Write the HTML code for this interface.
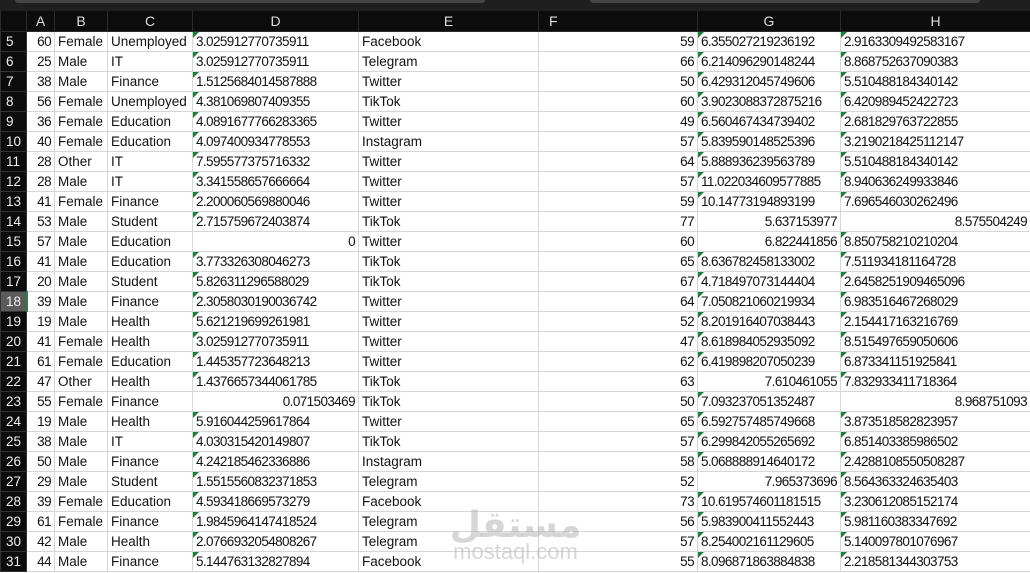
<!DOCTYPE html>
<html><head><meta charset="utf-8"><style>
body{margin:0;width:1030px;height:573px;overflow:hidden;background:#fff;font-family:"Liberation Sans",Arial,sans-serif;position:relative}
.top{position:absolute;left:0;top:0;width:1030px;height:12px;background:#1f1f1f}
.top i{position:absolute;top:0;height:3px;background:#444;border-radius:0 0 3px 3px}
table{position:absolute;left:0;top:11px;width:1030px;border-collapse:collapse;table-layout:fixed;font-size:13.5px}
td,th{height:19px;padding:0 3px;border:1px solid #d6d6d6;white-space:nowrap;overflow:hidden;color:#111;line-height:19px}
th{background:#0c0c0c;color:#ddd;font-weight:normal;border-color:#2a2a2a;border-top:none;text-align:center;height:20px;font-size:14px}
td.n{background:#0c0c0c;color:#eee;text-align:left;padding-left:5px;border-color:#333;letter-spacing:0}
td.n.s{background:#5b5b5b;border-right:2px solid #2e7d4a}
.r{text-align:right;letter-spacing:-.6px}
.t{position:relative;letter-spacing:-.6px}
.t:before{content:"";position:absolute;left:0;top:0;border-top:6px solid #1a7f37;border-right:6px solid transparent}
.wm{position:absolute;left:448px;top:503px;color:rgba(180,180,180,.55);text-align:center;width:135px}
.wm .a{font-family:"Noto Sans CJK SC","DejaVu Sans",sans-serif;font-size:36px;font-weight:bold;line-height:38px}
.wm .b{font-size:22px;line-height:22px}
</style></head><body>
<div class="top"><i style="left:15px;width:470px"></i><i style="left:590px;width:390px"></i></div>
<table>
<colgroup><col style="width:26px"><col style="width:28px"><col style="width:53px"><col style="width:85px"><col style="width:166px"><col style="width:180px"><col style="width:159px"><col style="width:143px"><col style="width:190px"></colgroup>
<tr><th style="background:#0c0c0c"></th><th>A</th><th>B</th><th>C</th><th>D</th><th>E</th><th style="text-align:left;padding-left:10px">F</th><th>G</th><th>H</th></tr>
<tr><td class="n">5</td><td class="r">60</td><td>Female</td><td>Unemployed</td><td class="t">3.025912770735911</td><td>Facebook</td><td class="r">59</td><td class="t">6.355027219236192</td><td class="t">2.9163309492583167</td></tr>
<tr><td class="n">6</td><td class="r">25</td><td>Male</td><td>IT</td><td class="t">3.025912770735911</td><td>Telegram</td><td class="r">66</td><td class="t">6.214096290148244</td><td class="t">8.868752637090383</td></tr>
<tr><td class="n">7</td><td class="r">38</td><td>Male</td><td>Finance</td><td class="t">1.5125684014587888</td><td>Twitter</td><td class="r">50</td><td class="t">6.429312045749606</td><td class="t">5.510488184340142</td></tr>
<tr><td class="n">8</td><td class="r">56</td><td>Female</td><td>Unemployed</td><td class="t">4.381069807409355</td><td>TikTok</td><td class="r">60</td><td class="t">3.9023088372875216</td><td class="t">6.420989452422723</td></tr>
<tr><td class="n">9</td><td class="r">36</td><td>Female</td><td>Education</td><td class="t">4.0891677766283365</td><td>Twitter</td><td class="r">49</td><td class="t">6.560467434739402</td><td class="t">2.681829763722855</td></tr>
<tr><td class="n">10</td><td class="r">40</td><td>Female</td><td>Education</td><td class="t">4.097400934778553</td><td>Instagram</td><td class="r">57</td><td class="t">5.839590148525396</td><td class="t">3.2190218425112147</td></tr>
<tr><td class="n">11</td><td class="r">28</td><td>Other</td><td>IT</td><td class="t">7.595577375716332</td><td>Twitter</td><td class="r">64</td><td class="t">5.888936239563789</td><td class="t">5.510488184340142</td></tr>
<tr><td class="n">12</td><td class="r">28</td><td>Male</td><td>IT</td><td class="t">3.341558657666664</td><td>Twitter</td><td class="r">57</td><td class="t">11.022034609577885</td><td class="t">8.940636249933846</td></tr>
<tr><td class="n">13</td><td class="r">41</td><td>Female</td><td>Finance</td><td class="t">2.200060569880046</td><td>Twitter</td><td class="r">59</td><td class="t">10.14773194893199</td><td class="t">7.696546030262496</td></tr>
<tr><td class="n">14</td><td class="r">53</td><td>Male</td><td>Student</td><td class="t">2.715759672403874</td><td>TikTok</td><td class="r">77</td><td class="r">5.637153977</td><td class="r">8.575504249</td></tr>
<tr><td class="n">15</td><td class="r">57</td><td>Male</td><td>Education</td><td class="r">0</td><td>Twitter</td><td class="r">60</td><td class="r">6.822441856</td><td class="t">8.850758210210204</td></tr>
<tr><td class="n">16</td><td class="r">41</td><td>Male</td><td>Education</td><td class="t">3.773326308046273</td><td>TikTok</td><td class="r">65</td><td class="t">8.636782458133002</td><td class="t">7.511934181164728</td></tr>
<tr><td class="n">17</td><td class="r">20</td><td>Male</td><td>Student</td><td class="t">5.826311296588029</td><td>TikTok</td><td class="r">67</td><td class="t">4.718497073144404</td><td class="t">2.6458251909465096</td></tr>
<tr><td class="n s">18</td><td class="r">39</td><td>Male</td><td>Finance</td><td class="t">2.3058030190036742</td><td>Twitter</td><td class="r">64</td><td class="t">7.050821060219934</td><td class="t">6.983516467268029</td></tr>
<tr><td class="n">19</td><td class="r">19</td><td>Male</td><td>Health</td><td class="t">5.621219699261981</td><td>Twitter</td><td class="r">52</td><td class="t">8.201916407038443</td><td class="t">2.154417163216769</td></tr>
<tr><td class="n">20</td><td class="r">41</td><td>Female</td><td>Health</td><td class="t">3.025912770735911</td><td>Twitter</td><td class="r">47</td><td class="t">8.618984052935092</td><td class="t">8.515497659050606</td></tr>
<tr><td class="n">21</td><td class="r">61</td><td>Female</td><td>Education</td><td class="t">1.445357723648213</td><td>Twitter</td><td class="r">62</td><td class="t">6.419898207050239</td><td class="t">6.873341151925841</td></tr>
<tr><td class="n">22</td><td class="r">47</td><td>Other</td><td>Health</td><td class="t">1.4376657344061785</td><td>TikTok</td><td class="r">63</td><td class="r">7.610461055</td><td class="t">7.832933411718364</td></tr>
<tr><td class="n">23</td><td class="r">55</td><td>Female</td><td>Finance</td><td class="r">0.071503469</td><td>TikTok</td><td class="r">50</td><td class="t">7.093237051352487</td><td class="r">8.968751093</td></tr>
<tr><td class="n">24</td><td class="r">19</td><td>Male</td><td>Health</td><td class="t">5.916044259617864</td><td>Twitter</td><td class="r">65</td><td class="t">6.592757485749668</td><td class="t">3.873518582823957</td></tr>
<tr><td class="n">25</td><td class="r">38</td><td>Male</td><td>IT</td><td class="t">4.030315420149807</td><td>TikTok</td><td class="r">57</td><td class="t">6.299842055265692</td><td class="t">6.851403385986502</td></tr>
<tr><td class="n">26</td><td class="r">50</td><td>Male</td><td>Finance</td><td class="t">4.242185462336886</td><td>Instagram</td><td class="r">58</td><td class="t">5.068888914640172</td><td class="t">2.4288108550508287</td></tr>
<tr><td class="n">27</td><td class="r">29</td><td>Male</td><td>Student</td><td class="t">1.5515560832371853</td><td>Telegram</td><td class="r">52</td><td class="r">7.965373696</td><td class="t">8.564363324635403</td></tr>
<tr><td class="n">28</td><td class="r">39</td><td>Female</td><td>Education</td><td class="t">4.593418669573279</td><td>Facebook</td><td class="r">73</td><td class="t">10.619574601181515</td><td class="t">3.230612085152174</td></tr>
<tr><td class="n">29</td><td class="r">61</td><td>Female</td><td>Finance</td><td class="t">1.9845964147418524</td><td>Telegram</td><td class="r">56</td><td class="t">5.983900411552443</td><td class="t">5.981160383347692</td></tr>
<tr><td class="n">30</td><td class="r">42</td><td>Male</td><td>Health</td><td class="t">2.0766932054808267</td><td>Telegram</td><td class="r">57</td><td class="t">8.254002161129605</td><td class="t">5.140097801076967</td></tr>
<tr><td class="n">31</td><td class="r">44</td><td>Male</td><td>Finance</td><td class="t">5.144763132827894</td><td>Facebook</td><td class="r">55</td><td class="t">8.096871863884838</td><td class="t">2.218581344303753</td></tr>
</table>
<div class="wm"><div class="a">مستقل</div><div class="b">mostaql.com</div></div>
</body></html>
